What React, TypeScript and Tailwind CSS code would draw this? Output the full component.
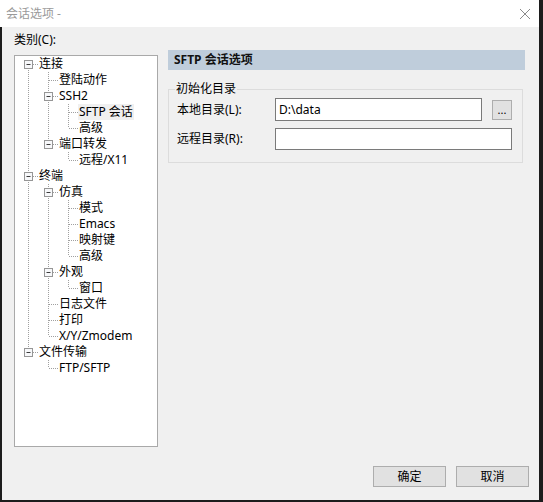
import React from 'react';

type TNode = { label: string; selected?: boolean; children?: TNode[] };

const TREE: TNode[] = [
  {
    label: '连接',
    children: [
      { label: '登陆动作' },
      { label: 'SSH2', children: [{ label: 'SFTP 会话', selected: true }, { label: '高级' }] },
      { label: '端口转发', children: [{ label: '远程/X11' }] },
    ],
  },
  {
    label: '终端',
    children: [
      {
        label: '仿真',
        children: [{ label: '模式' }, { label: 'Emacs' }, { label: '映射键' }, { label: '高级' }],
      },
      { label: '外观', children: [{ label: '窗口' }] },
      { label: '日志文件' },
      { label: '打印' },
      { label: 'X/Y/Zmodem' },
    ],
  },
  { label: '文件传输', children: [{ label: 'FTP/SFTP' }] },
];

type Row = { node: TNode; depth: number; rails: boolean[]; hasNext: boolean; first: boolean };

function flatten(nodes: TNode[], depth = 0, rails: boolean[] = []): Row[] {
  const out: Row[] = [];
  nodes.forEach((n, i) => {
    const hasNext = i < nodes.length - 1;
    out.push({ node: n, depth, rails, hasNext, first: depth === 0 && i === 0 });
    if (n.children) out.push(...flatten(n.children, depth + 1, [...rails, hasNext]));
  });
  return out;
}

const LINE = '#a0a0a0';

function Rail({ on }: { on: boolean }) {
  return (
    <svg width="20" height="16" className="shrink-0">
      {on && <line x1="10.5" y1="0" x2="10.5" y2="16" stroke={LINE} strokeDasharray="1 1" />}
    </svg>
  );
}

function Joint({ r }: { r: Row }) {
  return (
    <svg width="20" height="16" className="shrink-0">
      {!r.first && <line x1="10.5" y1="0" x2="10.5" y2="8" stroke={LINE} strokeDasharray="1 1" />}
      {r.hasNext && <line x1="10.5" y1="8" x2="10.5" y2="16" stroke={LINE} strokeDasharray="1 1" />}
      <line x1="11" y1="8.5" x2="20" y2="8.5" stroke={LINE} strokeDasharray="1 1" />
      {r.node.children && (
        <>
          <rect x="6.5" y="4.5" width="8" height="8" fill="#f7f8fa" stroke="#969696" />
          <line x1="8.5" y1="8.5" x2="12.5" y2="8.5" stroke="#3c3c3c" />
        </>
      )}
    </svg>
  );
}

function Tree() {
  const rows = flatten(TREE);
  return (
    <div className="w-[144px] h-[392px] bg-white border border-[#a9a9a9] pl-[3px]">
      {rows.map((r, i) => (
        <div key={i} className="flex h-[16px] items-center">
          {r.rails.map((on, j) => (
            <Rail key={j} on={on} />
          ))}
          <Joint r={r} />
          <span
            className={
              'px-[1px] leading-[16px] whitespace-nowrap text-[#000] ' +
              (r.node.selected ? 'bg-[#f0f0f0]' : '')
            }
          >
            {r.node.label}
          </span>
        </div>
      ))}
    </div>
  );
}

function Button({ children }: { children: React.ReactNode }) {
  return (
    <button className="w-[73px] h-[21px] bg-[#e1e1e1] border border-[#adadad] text-[12px] leading-[19px] text-black">
      {children}
    </button>
  );
}

export default function App() {
  return (
    <div className="w-[543px] h-[502px] flex flex-col bg-[#f0f0f0] border-r-[4px] border-[#1c1c1c] text-[12px] text-black font-['Noto_Sans','Noto_Sans_CJK_SC',sans-serif]">
      {/* title bar */}
      <div className="h-[27px] shrink-0 bg-white flex items-center justify-between pl-[6px] pr-[8px]">
        <span className="text-[#9a9a9a] leading-[16px]">会话选项 -</span>
        <svg width="12" height="12" viewBox="0 0 12 12">
          <path d="M1 1 L11 11 M11 1 L1 11" stroke="#8a8a8a" strokeWidth="1" />
        </svg>
      </div>

      <div className="flex-1 flex flex-col border-l-[2px] border-b-[2px] border-[#1c1c1c]">
        <div className="flex items-start pl-[12px] gap-[10px]">
          {/* category tree */}
          <div className="pt-[5px]">
            <div className="leading-[16px] mb-[7px]">类别(C):</div>
            <Tree />
          </div>

          {/* options */}
          <div className="mt-[23px] w-[357px]">
            <div className="h-[20px] bg-[#bfcddb] pl-[6px] font-bold leading-[20px] text-[#111]">
              SFTP 会话选项
            </div>
            <fieldset className="mt-[11px] w-[355px] border border-[#dcdcdc] pl-[8px] pr-[10px] pb-[12px]">
              <legend className="-ml-[2px] px-[1px] leading-[16px]">初始化目录</legend>
              <div className="flex items-center h-[23px] mt-[1px]">
                <span className="w-[98px] leading-[16px]">本地目录(L):</span>
                <div className="w-[207px] h-[23px] bg-white border border-[#7a7a7a] pl-[3px] leading-[21px]">
                  D:\data
                </div>
                <div className="ml-[10px] w-[20px] h-[20px] bg-[#e1e1e1] border border-[#adadad] text-[11px] leading-[18px] text-center">
                  ...
                </div>
              </div>
              <div className="flex items-center h-[22px] mt-[7px]">
                <span className="w-[98px] leading-[16px]">远程目录(R):</span>
                <div className="w-[237px] h-[22px] bg-white border border-[#7a7a7a]" />
              </div>
            </fieldset>
          </div>
        </div>

        <div className="flex-1" />
        <div className="flex justify-end gap-[10px] pr-[10px] pb-[13px]">
          <Button>确定</Button>
          <Button>取消</Button>
        </div>
      </div>
    </div>
  );
}
